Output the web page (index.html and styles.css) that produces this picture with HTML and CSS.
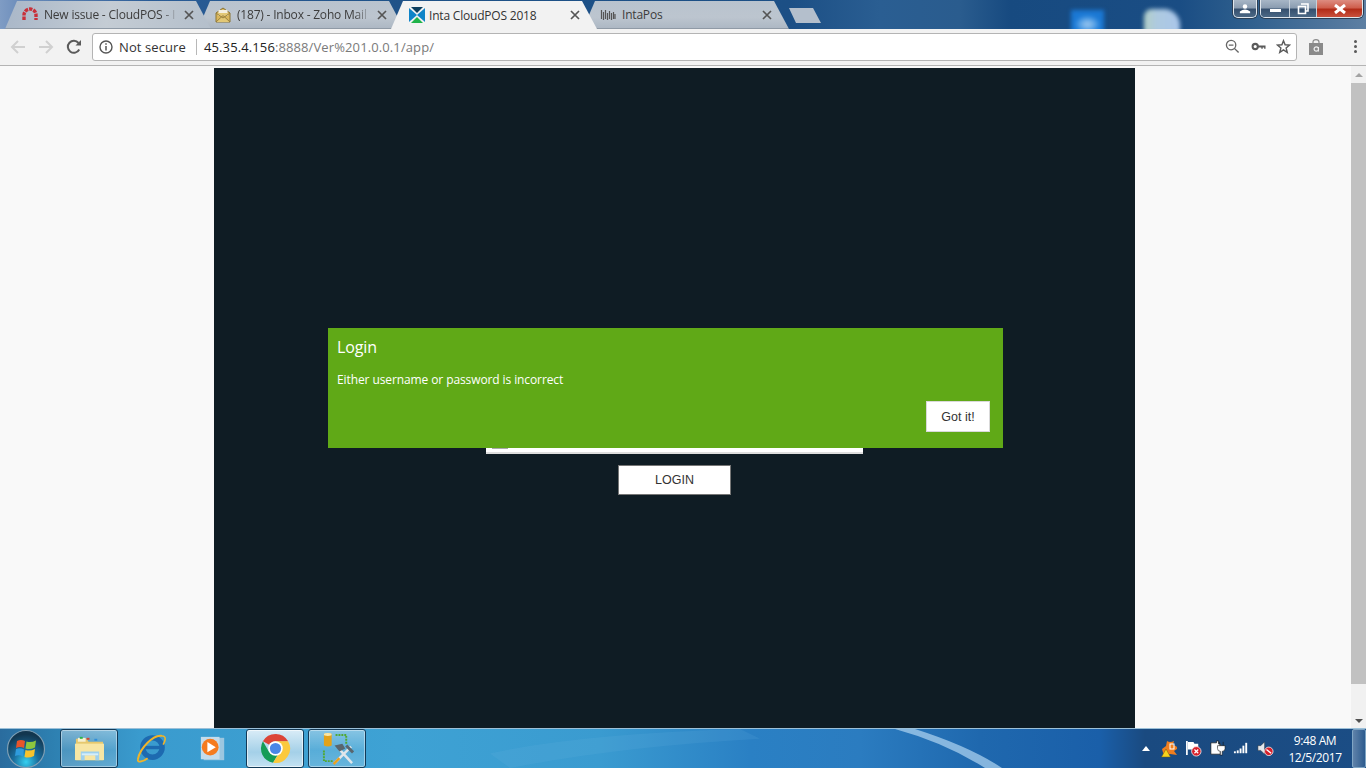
FILE: index.html
```html
<!DOCTYPE html>
<html lang="en">
<head>
<meta charset="utf-8">
<title>Inta CloudPOS 2018</title>
<link rel="stylesheet" href="styles.css">
</head>
<body>
<header class="tabstrip">
  <span class="blob blob-blue"></span>
  <span class="blob blob-light"></span>
  <div class="tab tab-first">
    <svg class="favicon" viewBox="0 0 16 16"><path d="M2 13 V8 A6 6 0 0 1 14 8 V13" fill="none" stroke="#c9303a" stroke-width="3.400" stroke-dasharray="3.400 1"/></svg>
    <span class="tab-title">New issue - CloudPOS - I</span>
    <svg class="tab-close" viewBox="0 0 10 10"><path d="M1 1 L9 9 M9 1 L1 9" stroke="#555" stroke-width="1.7"/></svg>
  </div>
  <div class="tab tab-second">
    <svg class="favicon" viewBox="0 0 16 16"><path d="M1 6 L8 1 L15 6 V15 H1 Z" fill="#d9b65c" stroke="#8a7434"/><path d="M3.5 3 H12.5 V9 H3.5 Z" fill="#f4efdf"/><path d="M1 15 L8 8.5 L15 15 M1 6 L8 11 L15 6" fill="#e3c875" stroke="#8a7434" stroke-width=".8"/></svg>
    <span class="tab-title">(187) - Inbox - Zoho Mail</span>
    <svg class="tab-close" viewBox="0 0 10 10"><path d="M1 1 L9 9 M9 1 L1 9" stroke="#555" stroke-width="1.7"/></svg>
  </div>
  <div class="tab tab-active">
    <svg class="favicon" viewBox="0 0 16 16"><path d="M0 1 L8 8 L0 15 Z" fill="#0f84c8"/><path d="M16 1 L8 8 L16 15 Z" fill="#0f84c8"/><path d="M2 0 H14 L8 6 Z" fill="#0e3f5e"/><path d="M2 16 H14 L8 10 Z" fill="#20b34a"/></svg>
    <span class="tab-title">Inta CloudPOS 2018</span>
    <svg class="tab-close" viewBox="0 0 10 10"><path d="M1 1 L9 9 M9 1 L1 9" stroke="#555" stroke-width="1.7"/></svg>
  </div>
  <div class="tab tab-last">
    <svg class="favicon" viewBox="0 0 16 16"><path d="M1.5 3 V12 M3.5 5 V13 M5.5 3 V12 M7.5 6 V13 M9.5 4 V12 M11.5 6 V13 M13.5 5 V12 M15 7 V12" stroke="#555" stroke-width="1.2"/></svg>
    <span class="tab-title">IntaPos</span>
    <svg class="tab-close" viewBox="0 0 10 10"><path d="M1 1 L9 9 M9 1 L1 9" stroke="#555" stroke-width="1.7"/></svg>
  </div>
  <div class="new-tab"></div>
  <div class="window-controls">
    <div class="win-btn win-user">
      <svg viewBox="0 0 14 12" class="win-glyph"><circle cx="7" cy="3" r="2.6" fill="#fff"/><path d="M1 11 V9 Q7 4 13 9 V11 Z" fill="#fff"/></svg>
    </div>
    <div class="win-group">
      <div class="win-btn win-min"><span class="min-bar"></span></div>
      <div class="win-btn win-max">
        <svg viewBox="0 0 12 12" class="win-glyph"><path d="M4 1 H11 V8 H8.5 M1.5 3.5 H8.5 V10.5 H1.5 Z" fill="none" stroke="#fff" stroke-width="1.6"/></svg>
      </div>
      <div class="win-btn win-close">
        <svg viewBox="0 0 14 10" class="win-glyph-x"><path d="M2 1 L12 9 M12 1 L2 9" stroke="#fff" stroke-width="3"/></svg>
      </div>
    </div>
  </div>
</header>

<nav class="toolbar">
  <svg class="nav-icon" viewBox="0 0 16 16"><path d="M15 8 H2 M8 2 L2 8 L8 14" fill="none" stroke="#d0d0d0" stroke-width="2"/></svg>
  <svg class="nav-icon" viewBox="0 0 16 16"><path d="M1 8 H14 M8 2 L14 8 L8 14" fill="none" stroke="#d0d0d0" stroke-width="2"/></svg>
  <svg class="nav-icon" viewBox="0 0 16 16"><path d="M13.2 10.5 A6 6 0 1 1 12.5 4" fill="none" stroke="#5a5a5a" stroke-width="2"/><path d="M9.5 6.5 H15 V1 Z" fill="#5a5a5a"/></svg>
  <div class="omnibox">
    <svg class="info-icon" viewBox="0 0 14 14"><circle cx="7" cy="7" r="6" fill="none" stroke="#555" stroke-width="1.4"/><path d="M7 6 V10.5 M7 3.2 V4.8" stroke="#555" stroke-width="1.5"/></svg>
    <span class="security">Not secure</span>
    <span class="omni-sep"></span>
    <span class="url"><span class="url-host">45.35.4.156</span>:8888/Ver%201.0.0.1/app/</span>
    <span class="omni-spacer"></span>
    <svg class="omni-icon" viewBox="0 0 16 16"><circle cx="6.5" cy="6.5" r="5" fill="none" stroke="#666" stroke-width="1.4"/><path d="M4 6.5 H9 M10 10 L14.5 14.5" stroke="#666" stroke-width="1.5"/></svg>
    <svg class="omni-icon" viewBox="0 0 16 16"><circle cx="4.5" cy="8" r="2.8" fill="none" stroke="#5a5a5a" stroke-width="2.2"/><path d="M7 7 H15.5 V10.5 H14 V9 H12.5 V10.5 H11 V9 H7 Z" fill="#5a5a5a"/></svg>
    <svg class="omni-icon" viewBox="0 0 16 16"><path d="M8 1.8 L9.7 6.2 L14.5 6.5 L10.8 9.5 L12 14.2 L8 11.6 L4 14.2 L5.2 9.5 L1.5 6.5 L6.3 6.2 Z" fill="none" stroke="#5a5a5a" stroke-width="1.5"/></svg>
  </div>
  <svg class="bag-icon" viewBox="0 0 16 16"><path d="M1 4 H15 V16 H1 Z" fill="#8a8a8a"/><path d="M5 4 V3 Q5 .7 8 .7 Q11 .7 11 3 V4" fill="none" stroke="#8a8a8a" stroke-width="1.2"/><circle cx="8.3" cy="10" r="2.2" fill="none" stroke="#eee" stroke-width="1.2"/><path d="M10.5 8 V12.5" stroke="#eee" stroke-width="1"/></svg>
  <div class="menu-dots"><span class="dot"></span><span class="dot"></span><span class="dot"></span></div>
</nav>

<div class="viewport">
  <main class="page">
    <section class="app-panel">
      <form class="login-form">
        <div class="login-field"><span class="field-icon"></span></div>
        <button type="button" class="login-btn">LOGIN</button>
      </form>
      <div class="dialog">
        <div class="dialog-title">Login</div>
        <div class="dialog-text">Either username or password is incorrect</div>
        <div class="dialog-actions"><button type="button" class="got-it">Got it!</button></div>
      </div>
    </section>
  </main>
  <aside class="scrollbar">
    <span class="arrow-up"></span>
    <span class="thumb"></span>
    <span class="arrow-down"></span>
  </aside>
</div>

<footer class="taskbar">
  <svg class="task-glare" viewBox="0 0 1366 40" preserveAspectRatio="none"><path d="M895 0 H915 Q970 18 1002 40 H985 Q945 14 895 0 Z" fill="#a8cfee" opacity=".75"/><path d="M490 25 Q580 5 740 0 L760 10 Q620 18 510 40 Z" fill="#7fc0e6" opacity=".12"/></svg>
  <div class="start-orb">
    <svg viewBox="0 0 40 40" class="orb-svg">
      <defs><radialGradient id="orb" cx=".5" cy=".85" r=".75"><stop offset="0" stop-color="#35d0f0"/><stop offset=".45" stop-color="#1a6e9e"/><stop offset="1" stop-color="#12364f"/></radialGradient></defs>
      <circle cx="20" cy="20" r="18.5" fill="url(#orb)" stroke="#7f9fb5" stroke-width="1.2"/>
      <path d="M11 12 Q15 10 19 12 L18 19 Q14 17 10 19 Z" fill="#e8542a"/>
      <path d="M20.500 12.500 Q25 14 30 11.500 L29 18.500 Q24 21 19.500 19.500 Z" fill="#8cc63f"/>
      <path d="M10 20 Q14 18.500 18 20.500 L17 27.500 Q13 25.500 9 27 Z" fill="#2f9bdc"/>
      <path d="M19.500 21 Q24 22.500 29 20 L28 27 Q23 29.500 18.500 28 Z" fill="#f8c32c"/>
    </svg>
  </div>
  <div class="task-items">
    <div class="task-btn task-open">
      <svg viewBox="0 0 32 28" class="task-icon"><path d="M2 4 H13 L15 7 H30 V26 H2 Z" fill="#e6c86e"/><path d="M4 3 H12 V7 H4 Z" fill="#f5f0d0"/><rect x="6" y="2" width="3" height="2" fill="#2db34a"/><rect x="13" y="3" width="3" height="2" fill="#d8452e"/><rect x="21" y="4" width="3" height="2" fill="#2f8fdc"/><path d="M1 9 H31 V26 H1 Z" fill="#f7e6a4"/><path d="M7 17 H26 V26 H22 V21 H11 V26 H7 Z" fill="#9ed0ec"/><path d="M8 19 H25 V21 H8 Z" fill="#d5eefa"/></svg>
    </div>
    <div class="task-btn">
      <svg viewBox="0 0 32 32" class="task-icon"><circle cx="17" cy="15" r="10" fill="none" stroke="#1d6ab0" stroke-width="5.500"/><path d="M9 15 H27" stroke="#1d6ab0" stroke-width="3.500"/><path d="M27 3 C18 1 4 16 2 27 C1 31 7 30 12 26" fill="none" stroke="#f0b429" stroke-width="2"/><path d="M27 3 C32 3 30 9 28 12" fill="none" stroke="#f0b429" stroke-width="1.600"/></svg>
    </div>
    <div class="task-btn">
      <svg viewBox="0 0 30 30" class="task-icon task-icon-wmp"><rect x="5" y="3" width="22" height="24" fill="#9cc7e0"/><rect x="2" y="2" width="20" height="24" fill="#c4dcec"/><circle cx="12" cy="13" r="9" fill="#f57b1f"/><path d="M9 7.500 L18 13 L9 18.500 Z" fill="#fff"/></svg>
    </div>
    <div class="task-btn task-active">
      <svg viewBox="0 0 32 32" class="task-icon">
        <path d="M16 1 A15 15 0 0 1 29 8.500 L16 8.500 Z" fill="#dc4437"/><path d="M3 8.500 A15 15 0 0 1 16 1 H16 L29 8.500 H16 A7.500 7.500 0 0 0 9.500 12.200 Z" fill="#dc4437"/>
        <path d="M3 8.500 A15 15 0 0 0 13.500 30.800 L20 19.500 A7.500 7.500 0 0 1 9.500 19.800 Z" fill="#159c57"/><path d="M29 8.500 A15 15 0 0 1 13.500 30.800 L20 20 A7.500 7.500 0 0 0 22.500 12 L16 8.500 Z" fill="#fbc93d"/>
        <circle cx="16" cy="16" r="7.500" fill="#fff"/><circle cx="16" cy="16" r="5.800" fill="#4a87e8"/>
      </svg>
    </div>
    <div class="task-btn task-open">
      <svg viewBox="0 0 34 34" class="task-icon task-icon-tool"><path d="M3 2 Q7 0 11 2 V14 Q7 16 3 14 Z" fill="#e3a21a"/><ellipse cx="7" cy="2.500" rx="4" ry="1.500" fill="#f9e7a8"/><path d="M15 3 H26 V12 M3 19 V30 H12" fill="none" stroke="#52a832" stroke-width="2" stroke-dasharray="2 1"/><path d="M14 32 L31 15 M19 18 L32 32" stroke="#dfe6ea" stroke-width="2.600"/><path d="M14 14 L22 12 L25 17 L19 20 Z" fill="#59666e"/><path d="M26 14 L33 21" stroke="#59666e" stroke-width="3"/><path d="M13 33 L19 27" stroke="#e8a020" stroke-width="2.600"/></svg>
    </div>
  </div>
  <div class="task-spacer"></div>
  <div class="tray">
    <span class="tray-arrow"></span>
    <svg class="tray-icon tray-avast" viewBox="0 0 18 18"><path d="M6 1 Q9 3 13 1 L12 5 Q17 6 16 9 L13 11 L16 15 L9 14 L3 16 L1 9 L5 6 Z" fill="#f07e1e"/><path d="M5 9 L9.500 17 H.5 Z" fill="#f7d21c" stroke="#6b5a10" stroke-width=".5"/><rect x="9" y="4" width="4" height="5" fill="none" stroke="#fff" stroke-width="1"/></svg>
    <svg class="tray-icon" viewBox="0 0 18 18"><path d="M2 1 V16" stroke="#fff" stroke-width="1.800"/><path d="M3 2 H9 L10 4 H14 V10 H3 Z" fill="#fff"/><circle cx="12" cy="12" r="5" fill="#d7202a" stroke="#fff" stroke-width=".8"/><path d="M10 10 L14 14 M14 10 L10 14" stroke="#fff" stroke-width="1.300"/></svg>
    <svg class="tray-icon" viewBox="0 0 18 18"><path d="M2 3 H8 V1 H10 V4 H12 V15 H2 Z" fill="#fff" stroke="#111" stroke-width=".7"/><path d="M11 2 V6 M15 2 V6 M9 6 H17 V9 Q17 12 14 12 V16 H12 V12 Q9 12 9 9 Z" fill="#fff" stroke="#111" stroke-width=".6"/></svg>
    <svg class="tray-icon" viewBox="0 0 18 18"><rect x="1" y="12" width="2" height="2" fill="#fff"/><rect x="4" y="11" width="2" height="3" fill="#fff"/><rect x="7" y="9" width="2" height="5" fill="#fff"/><rect x="10" y="6" width="2" height="8" fill="#fff"/><rect x="13" y="3" width="2" height="11" fill="#fff"/></svg>
    <svg class="tray-icon" viewBox="0 0 18 18"><path d="M1 6 H4 L8 2 V15 L4 11 H1 Z" fill="#e4e8ec" stroke="#333" stroke-width=".5"/><circle cx="12.500" cy="12" r="4.500" fill="#d7202a" stroke="#fff" stroke-width=".8"/><path d="M10 10 L15 14" stroke="#fff" stroke-width="1.500"/></svg>
    <div class="clock"><span>9:48 AM</span><span>12/5/2017</span></div>
    <div class="show-desktop"></div>
  </div>
</footer>
</body>
</html>
```

FILE: styles.css
```css
* { box-sizing: border-box; }
html, body { margin: 0; padding: 0; height: 100%; }
body {
  width: 1366px;
  height: 768px;
  overflow: hidden;
  display: flex;
  flex-direction: column;
  font-family: "Open Sans", "Noto Sans", sans-serif;
  background: #f9f9f9;
}

/* Tab strip */
.tabstrip {
  position: relative;
  height: 29px;
  flex: none;
  display: flex;
  align-items: flex-end;
  padding-left: 5px;
  overflow: hidden;
  background:
    linear-gradient(90deg, #7f9cc4 0, #6c8dbb 20px, #2a5c96 150px, #1f5288 400px, #1c4f85 790px, #2a5e92 880px, #2a5c8e 960px, #174a80 1010px, #1a4d84 1180px, #2c5d8c 1240px, #5d7fa3 1366px);
}
.blob { position: absolute; filter: blur(2px); }
.blob-blue {
  left: 1071px;
  top: 10px;
  width: 33px;
  height: 24px;
  background: radial-gradient(ellipse 13px 9px at 50% 60%, #a5ccf0 0, #4a9ae4 70%, #1a78d4 100%);
}
.blob-light {
  left: 1144px;
  top: 9px;
  width: 36px;
  height: 24px;
  border-radius: 8px 16px 0 0;
  background: linear-gradient(90deg, #b4d0c6 0, #aecae0 35%, #aac6ea 100%);
}
.tab {
  position: relative;
  height: 28px;
  width: 206px;
  margin-right: -14px;
  flex: none;
  display: flex;
  align-items: center;
  padding: 0 17px 0 17px;
  font-size: 12px;
  color: #3c3c3c;
  background: linear-gradient(180deg, #b9c3ce 0, #bcc5cf 60%, #adb8c4 100%);
  clip-path: polygon(0 100%, 12px 0, 191px 0, 206px 100%);
  border-bottom: 1px solid #8f9aa6;
}
.tab-first { z-index: 3; background: linear-gradient(100deg, #a9b7c8 0, #c4ccd4 50%, #b4bfcb 100%); }
.tab-second { z-index: 2; margin-left: 1px; }
.tab-active { z-index: 4; background: #f2f2f2; color: #333; border-bottom: 0; margin-left: 1px; }
.tab-last { z-index: 1; margin-left: 0; }
.favicon { width: 16px; height: 16px; flex: none; margin-right: 6px; }
.tab-active .favicon { margin-left: 1px; margin-right: 4px; }
.tab-title {
  flex: 1;
  min-width: 0;
  white-space: nowrap;
  overflow: hidden;
  letter-spacing: -.2px;
  -webkit-mask-image: linear-gradient(90deg, #000 88%, transparent 100%);
  mask-image: linear-gradient(90deg, #000 88%, transparent 100%);
}
.tab-close { width: 10px; height: 10px; flex: none; margin-left: 6px; }
.tab-last .tab-title, .tab-active .tab-title { -webkit-mask-image: none; mask-image: none; }
.new-tab {
  width: 32px;
  height: 15px;
  margin: 0 0 6px 14px;
  flex: none;
  background: #b4bfcc;
  clip-path: polygon(0 0, 24px 0, 32px 100%, 7px 100%);
}
.window-controls {
  margin-left: auto;
  align-self: flex-start;
  display: flex;
  gap: 3px;
  padding-right: 3px;
  position: relative;
}
.win-group { display: flex; border: 1px solid #e0e6ec; border-top: 0; border-radius: 0 0 5px 5px; overflow: hidden; box-shadow: 0 0 0 1px #2b3f55; }
.win-btn { height: 17px; display: flex; align-items: center; justify-content: center; background: linear-gradient(180deg, #a7b6c6 0, #8b9db1 45%, #36506e 55%, #4b6885 100%); }
.win-user { width: 24px; height: 18px; border: 1px solid #e0e6ec; border-top: 0; border-radius: 0 0 5px 5px; box-shadow: 0 0 0 1px #2b3f55; }
.win-min { width: 29px; border-right: 1px solid #c6d0da; }
.win-max { width: 27px; border-right: 1px solid #c6d0da; }
.win-close { width: 45px; background: linear-gradient(180deg, #dd8c80 0, #cf5f4d 45%, #b22c18 55%, #c9503c 100%); }
.win-glyph { width: 12px; height: 12px; }
.win-glyph-x { width: 14px; height: 10px; }
.min-bar { width: 11px; height: 3px; background: #fff; margin-top: 4px; }

/* Toolbar */
.toolbar {
  height: 37px;
  flex: none;
  display: flex;
  align-items: center;
  padding: 0 0 1px 10px;
  background: #f2f2f2;
  border-bottom: 1px solid #b4b4b4;
}
.nav-icon { width: 16px; height: 16px; margin-right: 12px; flex: none; }
.omnibox {
  width: 1205px;
  height: 28px;
  margin-left: -2px;
  flex: none;
  display: flex;
  align-items: center;
  padding: 0 5px 0 6px;
  background: #fff;
  border: 1px solid #b4b4b4;
  border-radius: 3px;
  font-size: 13px;
}
.info-icon { width: 14px; height: 14px; flex: none; margin-right: 6px; }
.security { color: #333; width: 67px; white-space: nowrap; letter-spacing: .1px; }
.omni-sep { width: 1px; height: 16px; background: #b8b8b8; margin: 0 7px 0 10px; flex: none; }
.url { color: #7a7a7a; white-space: nowrap; letter-spacing: .11px; }
.url-host { color: #222; }
.omni-spacer { flex: 1; }
.omni-icon { width: 15px; height: 15px; margin-left: 11px; flex: none; }
.omni-icon:last-child { margin-left: 10px; }
.bag-icon { width: 16px; height: 16px; margin-left: 11px; flex: none; }
.menu-dots { display: flex; flex-direction: column; gap: 2px; margin-left: 30px; flex: none; }
.dot { width: 3px; height: 3px; background: #5a5a5a; border-radius: 50%; }

/* Page */
.viewport { flex: 1; min-height: 0; display: flex; }
.page { flex: 1; min-width: 0; padding: 2px 0 0 214px; background: #f9f9f9; overflow: hidden; }
.app-panel {
  position: relative;
  width: 921px;
  height: 660px;
  background: #0f1c24;
  overflow: hidden;
}
.login-form { display: flex; flex-direction: column; align-items: center; padding-top: 356px; gap: 11px; }
.login-field {
  width: 377px;
  height: 30px;
  background: #fff;
  border-bottom: 2px solid #dedede;
  padding: 0 0 0 6px;
  display: flex;
  align-items: flex-end;
}
.field-icon { width: 16px; height: 2px; background: #a8a8a8; margin-bottom: 3px; }
.login-btn {
  width: 113px;
  height: 30px;
  background: #fff;
  border: 1px solid #767676;
  color: #333;
  font: 12.5px "Liberation Sans", Arial, sans-serif;
  padding: 0;
}
.dialog {
  position: absolute;
  left: 114px;
  top: 260px;
  width: 675px;
  height: 120px;
  background: #60a917;
  color: #fff;
  padding: 8px 13px 0 9px;
  display: flex;
  flex-direction: column;
}
.dialog-title { font-size: 16px; line-height: 22px; letter-spacing: -.1px; }
.dialog-text { font-size: 12px; line-height: 17px; margin-top: 13px; letter-spacing: -.1px; }
.dialog-actions { margin-top: 13px; display: flex; justify-content: flex-end; }
.got-it {
  width: 64px;
  height: 31px;
  background: #fff;
  border: 1px solid #d9d9d9;
  color: #333;
  font: 12.5px "Liberation Sans", Arial, sans-serif;
  padding: 0;
}

/* Scrollbar */
.scrollbar {
  width: 15px;
  flex: none;
  background: #f1f1f1;
  display: flex;
  flex-direction: column;
  align-items: center;
  padding-top: 7px;
}
.arrow-up { width: 0; height: 0; border: 4px solid transparent; border-top: 0; border-bottom: 4px solid #a3a3a3; flex: none; }
.thumb { width: 15px; height: 601px; margin-top: 6px; background: #c1c1c1; flex: none; }
.arrow-down { width: 0; height: 0; border: 4px solid transparent; border-bottom: 0; border-top: 4px solid #505050; margin-top: auto; margin-bottom: 5px; flex: none; }

/* Taskbar */
.taskbar {
  position: relative;
  height: 40px;
  flex: none;
  display: flex;
  align-items: stretch;
  color: #fff;
  border-top: 1px solid #9cc0d8;
  background: linear-gradient(90deg, #2a6c9e 0, #2d7fb0 50px, #3a9bce 140px, #3ea2d4 400px, #3a9bd0 600px, #2a80c4 750px, #2b7cc0 860px, #1f68ae 980px, #1a5fa9 1100px, #1a4a80 1145px, #1b4d85 1366px);
}
.task-glare { position: absolute; left: 0; top: 0; width: 100%; height: 100%; pointer-events: none; }
.start-orb { position: relative; width: 60px; flex: none; padding: 0 0 0 6px; display: flex; align-items: center; }
.orb-svg { width: 40px; height: 40px; }
.task-items { position: relative; display: flex; gap: 4px; }
.task-btn { width: 58px; height: 39px; display: flex; align-items: center; justify-content: center; border-radius: 3px; border: 1px solid transparent; }
.task-open { background: linear-gradient(180deg, rgba(255,255,255,.38), rgba(255,255,255,.14) 55%, rgba(255,255,255,.22)); border-color: #123a58; box-shadow: inset 0 0 0 1px rgba(255,255,255,.4); }
.task-active { background: linear-gradient(180deg, #d9ecf7, #a4d0e8 60%, #c4e2f2); border-color: #123a58; box-shadow: inset 0 0 0 1px rgba(255,255,255,.6); }
.task-icon { width: 31px; height: 31px; }
.task-icon-wmp { width: 28px; height: 28px; }
.task-icon-tool { width: 33px; height: 33px; }
.task-spacer { flex: 1; }
.tray { position: relative; display: flex; align-items: center; }
.tray-arrow { width: 0; height: 0; border: 4px solid transparent; border-top: 0; border-bottom: 5px solid #fff; margin-right: 11px; }
.tray-icon { width: 17px; height: 17px; margin-right: 7px; flex: none; }
.tray-avast { width: 18px; height: 18px; margin-right: 6px; }
.clock {
  width: 74px;
  margin-left: -3px;
  display: flex;
  flex-direction: column;
  align-items: center;
  font-size: 12px;
  line-height: 17px;
  letter-spacing: -.4px;
}
.show-desktop { width: 14px; height: 39px; border: 1px solid #7fa5c4; border-radius: 2px; background: linear-gradient(90deg, rgba(255,255,255,.3), rgba(255,255,255,.08)); }
```
